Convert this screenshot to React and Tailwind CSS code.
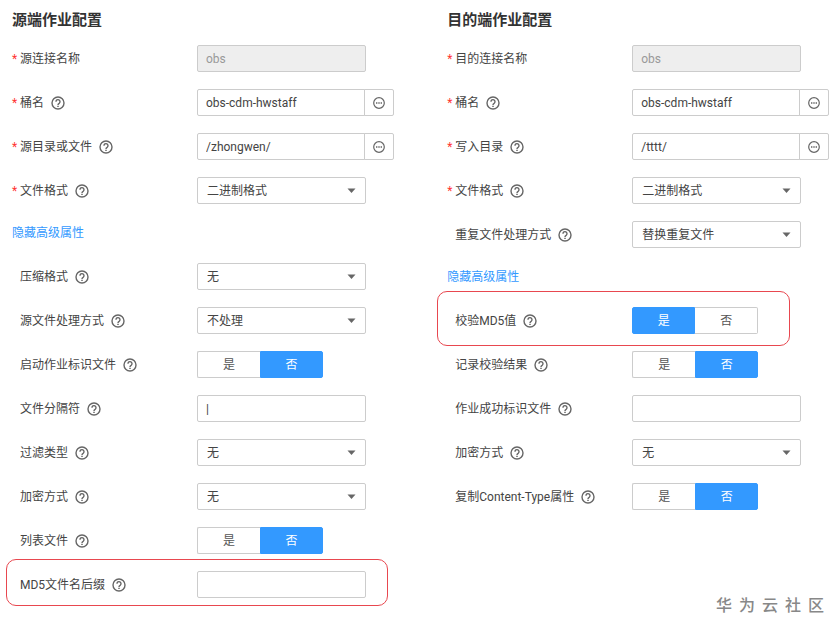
import React, { useId, useState } from 'react'

const sourceBasic = [
  { label: '源连接名称', type: 'text', value: 'obs', required: true, disabled: true },
  { label: '桶名', type: 'browse', value: 'obs-cdm-hwstaff', required: true, help: true },
  { label: '源目录或文件', type: 'browse', value: '/zhongwen/', required: true, help: true },
  { label: '文件格式', type: 'select', value: '二进制格式', required: true, help: true }
]

const sourceAdvanced = [
  { label: '压缩格式', type: 'select', value: '无', help: true },
  { label: '源文件处理方式', type: 'select', value: '不处理', help: true },
  { label: '启动作业标识文件', type: 'toggle', value: '否', help: true },
  { label: '文件分隔符', type: 'text', value: '|', help: true },
  { label: '过滤类型', type: 'select', value: '无', help: true },
  { label: '加密方式', type: 'select', value: '无', help: true },
  { label: '列表文件', type: 'toggle', value: '否', help: true },
  { label: 'MD5文件名后缀', type: 'text', value: '', help: true, highlight: 'left-[6px] w-[382px] -top-[12px] -bottom-[8px]' }
]

const targetBasic = [
  { label: '目的连接名称', type: 'text', value: 'obs', required: true, disabled: true },
  { label: '桶名', type: 'browse', value: 'obs-cdm-hwstaff', required: true, help: true },
  { label: '写入目录', type: 'browse', value: '/tttt/', required: true, help: true },
  { label: '文件格式', type: 'select', value: '二进制格式', required: true, help: true },
  { label: '重复文件处理方式', type: 'select', value: '替换重复文件', help: true }
]

const targetAdvanced = [
  { label: '校验MD5值', type: 'toggle', value: '是', help: true, highlight: 'left-[2px] w-[353px] -top-[16px] -bottom-[12px]' },
  { label: '记录校验结果', type: 'toggle', value: '否', help: true },
  { label: '作业成功标识文件', type: 'text', value: '', help: true },
  { label: '加密方式', type: 'select', value: '无', help: true },
  { label: '复制Content-Type属性', type: 'toggle', value: '否', help: true }
]

function HelpIcon() {
  return (
    <svg className="w-[14px] h-[14px] ml-[7px] mt-px shrink-0 text-[#666]" viewBox="0 0 14 14" fill="none" stroke="currentColor" aria-hidden="true">
      <circle cx="7" cy="7" r="6" strokeWidth="1.4" />
      <path d="M5 5.7a2 2 0 1 1 3.1 1.6C7.3 7.8 7 8.1 7 8.9" strokeWidth="1.4" />
      <path d="M7 9.7v1.3" strokeWidth="1.5" />
    </svg>
  )
}

function TextInput({ id, field }) {
  return (
    <input
      id={id}
      type="text"
      defaultValue={field.value}
      disabled={field.disabled}
      className="w-[169px] h-[27px] px-2 rounded-[2px] border border-[#ccc] bg-white text-[#444] outline-none focus:border-[#3399ff] disabled:bg-[#eee] disabled:text-[#999]"
    />
  )
}

function BrowseInput({ id, field }) {
  return (
    <div className="flex">
      <input
        id={id}
        type="text"
        defaultValue={field.value}
        className="w-[168px] h-[27px] px-2 rounded-l-[2px] border border-[#ccc] bg-white text-[#444] outline-none focus:border-[#3399ff]"
      />
      <button type="button" aria-label="选择" className="-ml-px w-[30px] h-[27px] flex items-center justify-center rounded-r-[2px] border border-[#ccc] text-[#666]">
        <svg className="w-3 h-3" viewBox="0 0 12 12" fill="none" stroke="currentColor" aria-hidden="true">
          <circle cx="6" cy="6" r="5.3" strokeWidth="1.2" />
          <path d="M3 6h1.4M5.3 6h1.4M7.6 6H9" strokeWidth="1.3" />
        </svg>
      </button>
    </div>
  )
}

function SelectInput({ id, field }) {
  return (
    <div className="relative w-[169px]">
      <select
        id={id}
        defaultValue={field.value}
        className="w-full h-[27px] pl-[9px] pr-6 rounded-[2px] border border-[#ccc] bg-white text-[#444] appearance-none outline-none focus:border-[#3399ff]"
      >
        <option value={field.value}>{field.value}</option>
      </select>
      <svg className="absolute right-[10px] top-[11px] w-[9px] h-[5px] text-[#666] pointer-events-none" viewBox="0 0 9 5" fill="currentColor" aria-hidden="true">
        <path d="M0.5 0.5h8L4.5 5z" />
      </svg>
    </div>
  )
}

function Toggle({ labelId, field }) {
  const [value, setValue] = useState(field.value)

  return (
    <div role="group" aria-labelledby={labelId} className="grid grid-cols-2 w-[126px]">
      {['是', '否'].map((option) => (
        <button
          key={option}
          type="button"
          aria-pressed={value === option}
          onClick={() => setValue(option)}
          className={`h-[27px] border first:rounded-l-[2px] last:rounded-r-[2px] ${
            value === option
              ? 'bg-[#3399ff] border-[#3399ff] text-white'
              : 'bg-white border-[#ccc] text-[#555] first:border-r-0 last:border-l-0'
          }`}
        >
          {option}
        </button>
      ))}
    </div>
  )
}

function Field({ field }) {
  const id = useId()
  const labelId = `${id}-label`

  return (
    <div className="relative flex items-center h-[27px] pl-3">
      {field.highlight && (
        <div className={`absolute rounded-[10px] border border-[#e8474f] pointer-events-none ${field.highlight}`}></div>
      )}
      <div className="flex items-center w-[185px] shrink-0 text-[#444]">
        <span className="w-2 shrink-0 text-[#f33]">{field.required ? '*' : ''}</span>
        {field.type === 'toggle'
          ? <span id={labelId}>{field.label}</span>
          : <label id={labelId} htmlFor={id}>{field.label}</label>}
        {field.help && <HelpIcon />}
      </div>
      {field.type === 'text' && <TextInput id={id} field={field} />}
      {field.type === 'browse' && <BrowseInput id={id} field={field} />}
      {field.type === 'select' && <SelectInput id={id} field={field} />}
      {field.type === 'toggle' && <Toggle labelId={labelId} field={field} />}
    </div>
  )
}

function JobSection({ title, basic, advanced }) {
  const [open, setOpen] = useState(true)

  return (
    <section>
      <h2 className="pl-3 mb-[11px] text-[15px] leading-7 font-bold text-[#333]">{title}</h2>
      <div className="flex flex-col gap-[17px]">
        {basic.map((field) => <Field key={field.label} field={field} />)}
        <a
          href="#advanced"
          onClick={(e) => { e.preventDefault(); setOpen(!open) }}
          className="self-start pl-3 leading-[25px] text-[#3399ff]"
        >
          {open ? '隐藏高级属性' : '显示高级属性'}
        </a>
        {open && advanced.map((field) => <Field key={field.label} field={field} />)}
      </div>
    </section>
  )
}

export default function App() {
  return (
    <main className="grid grid-cols-[13fr_12fr] bg-white text-[12px] leading-[18px] font-['Roboto','Noto_Sans_CJK_SC',sans-serif]">
      <div className="pt-[6px] pb-5">
        <JobSection title="源端作业配置" basic={sourceBasic} advanced={sourceAdvanced} />
      </div>
      <div className="flex flex-col pt-[6px]">
        <JobSection title="目的端作业配置" basic={targetBasic} advanced={targetAdvanced} />
        {/* Community watermark */}
        <p className="flex gap-[7px] self-end mt-auto mr-[13px] text-[16px] leading-6 font-medium text-[#888]">
          {[...'华为云社区'].map((char) => <span key={char}>{char}</span>)}
        </p>
      </div>
    </main>
  )
}
